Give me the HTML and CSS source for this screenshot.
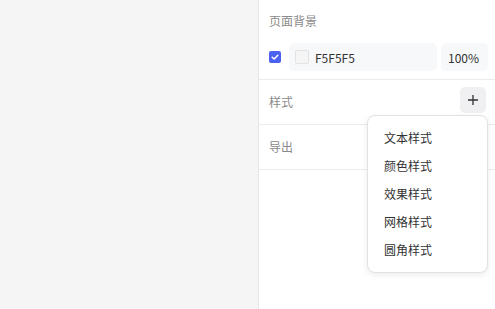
FILE: index.html
```html
<!DOCTYPE html>
<html lang="zh">
<head>
<meta charset="utf-8">
<link rel="stylesheet" href="styles.css">
</head>
<body>
<div class="app">
  <div class="canvas"></div>
  <div class="panel">
    <div class="section bg">
      <div class="title">页面背景</div>
      <div class="row">
        <span class="check">
          <svg width="12" height="12" viewBox="0 0 12 12"><path d="M3.2 6.2 L5.2 8 L8.8 4.2" fill="none" stroke="#fff" stroke-width="1.5" stroke-linecap="round" stroke-linejoin="round"/></svg>
        </span>
        <div class="color-input">
          <span class="swatch"></span>
          <span class="hex">F5F5F5</span>
        </div>
        <div class="pct">100%</div>
      </div>
    </div>
    <div class="section line">
      <div class="title">样式</div>
      <button class="add">
        <svg width="12" height="12" viewBox="0 0 12 12"><path d="M6 1 V11 M1 6 H11" stroke="#333" stroke-width="1.3"/></svg>
      </button>
    </div>
    <div class="section line">
      <div class="title">导出</div>
    </div>
    <div class="menu">
      <div class="item">文本样式</div>
      <div class="item">颜色样式</div>
      <div class="item">效果样式</div>
      <div class="item">网格样式</div>
      <div class="item">圆角样式</div>
    </div>
  </div>
</div>
</body>
</html>
```
FILE: styles.css
```css
* { box-sizing: border-box; }
html, body { margin: 0; padding: 0; }
body {
  font-family: "Noto Sans CJK SC", "Noto Sans", sans-serif;
  font-size: 12px;
  color: #333;
  background: #fff;
}
.app {
  display: flex;
  width: 495px;
  height: 309px;
}
.canvas {
  width: 259px;
  background: #f5f5f5;
  border-right: 1px solid #e5e5e5;
}
.panel {
  flex: 1;
  position: relative;
  background: #fff;
}
.section {
  border-bottom: 1px solid #ebebeb;
  padding: 0 9px 0 10px;
}
.title {
  color: #8a8a8a;
  line-height: 18px;
  font-size: 12px;
}
.bg {
  padding: 12px 7px 8px 10px;
  display: flex;
  flex-direction: column;
  gap: 13px;
}
.row {
  display: flex;
  align-items: center;
  height: 28px;
  gap: 4px;
}
.check {
  width: 12px;
  height: 12px;
  border-radius: 2px;
  background: #4b61f0;
  margin-right: 4px;
  display: flex;
}
.color-input {
  flex: 1;
  height: 28px;
  background: #f7f8fa;
  border-radius: 5px;
  display: flex;
  align-items: center;
  padding-left: 6px;
  gap: 6px;
}
.swatch {
  width: 14px;
  height: 14px;
  background: #f5f5f5;
  border: 1px solid #e3e3e3;
  border-radius: 2px;
}
.hex { color: #333; }
.pct {
  width: 47px;
  height: 28px;
  background: #f7f8fa;
  border-radius: 5px;
  display: flex;
  align-items: center;
  padding-left: 7px;
  color: #333;
}
.line {
  height: 45px;
  display: flex;
  align-items: center;
  justify-content: space-between;
}
.add {
  width: 26px;
  height: 26px;
  margin-top: -4px;
  border: none;
  border-radius: 5px;
  background: #f0f0f2;
  display: flex;
  align-items: center;
  justify-content: center;
  padding: 0;
}
.menu {
  position: absolute;
  left: 108px;
  top: 115px;
  width: 121px;
  padding: 8px 0;
  background: #fff;
  border: 1px solid #e2e2e2;
  border-radius: 8px;
  box-shadow: 0 2px 6px rgba(0,0,0,0.08);
}
.item {
  height: 28px;
  line-height: 28px;
  padding-left: 16px;
  color: #333;
}
```
